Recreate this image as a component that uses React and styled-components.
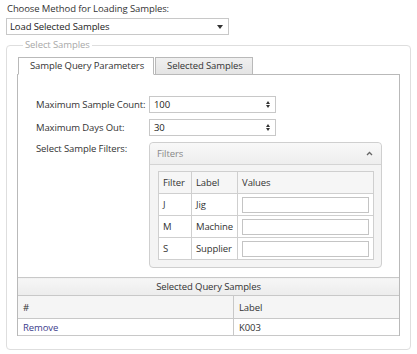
import styled, { createGlobalStyle } from 'styled-components'

const Global = createGlobalStyle`
  html, body {
    margin: 0;
    padding: 0;
    background: #fff;
  }
  body {
    font-family: "Open Sans", "Noto Sans", sans-serif;
    font-size: 9.5px;
    letter-spacing: -0.1px;
    color: #333;
  }
`

const Page = styled.div`
  width: 417px;
  height: 354px;
  box-sizing: border-box;
  padding: 1px 6px 0 6px;
`

const TopLabel = styled.div`
  height: 16px;
  line-height: 15px;
  padding-left: 1px;
`

const Select = styled.div`
  width: 223px;
  height: 17px;
  box-sizing: border-box;
  border: 1px solid #c8c8c8;
  display: flex;
  align-items: center;
  justify-content: space-between;
  padding: 0 5px 0 3px;
  margin-top: 1px;
  color: #222;
`

const Caret = styled.span`
  width: 0;
  height: 0;
  border-left: 3px solid transparent;
  border-right: 3px solid transparent;
  border-top: 4px solid #333;
`

const Fieldset = styled.fieldset`
  margin: 4px 0 0 0;
  padding: 6px 10px 12px 10px;
  border: 1px solid #dedede;
  border-radius: 4px;
  width: 405px;
  height: 311px;
  box-sizing: border-box;
`

const Legend = styled.legend`
  color: #a8a8a8;
  padding: 0 2px;
  margin-left: 6px;
  line-height: 12px;
`

const TabBar = styled.div`
  display: flex;
  padding-left: 1px;
  position: relative;
  z-index: 1;
`

const Tab = styled.div`
  height: 18px;
  box-sizing: border-box;
  border: 1px solid #b9b9b9;
  border-bottom: ${(p) => (p.$active ? '1px solid #fff' : '1px solid #b9b9b9')};
  background: ${(p) => (p.$active ? '#fff' : 'linear-gradient(#f0f0f0, #e4e4e4)')};
  padding: 0 9px 0 11px;
  line-height: 16px;
  color: #333;
  margin-right: 1px;
`

const Panel = styled.div`
  border: 1px solid #b9b9b9;
  margin-top: -1px;
  height: 262px;
  box-sizing: border-box;
  display: flex;
  flex-direction: column;
  justify-content: space-between;
`

const Form = styled.div`
  padding: 21px 0 0 18px;
  display: grid;
  grid-template-columns: 113px 127px;
  row-gap: 6px;
  align-items: center;
`

const FieldLabel = styled.div`
  color: #333;
  align-self: ${(p) => (p.$top ? 'start' : 'center')};
`

const Spinner = styled.div`
  height: 17px;
  box-sizing: border-box;
  border: 1px solid #c8c8c8;
  display: flex;
  align-items: center;
  justify-content: space-between;
  padding: 0 5px 0 4px;
  color: #222;
`

const Arrows = styled.span`
  display: flex;
  flex-direction: column;
  gap: 1px;
  &::before, &::after {
    content: '';
    width: 0;
    height: 0;
    border-left: 2.5px solid transparent;
    border-right: 2.5px solid transparent;
  }
  &::before { border-bottom: 3px solid #333; }
  &::after { border-top: 3px solid #333; }
`

const FiltersBox = styled.div`
  grid-column: 2;
  width: 233px;
  height: 126px;
  box-sizing: border-box;
  border: 1px solid #cfcfcf;
  border-radius: 4px;
  background: #f4f4f4;
  margin-top: -19px;
`

const FiltersHeader = styled.div`
  height: 22px;
  box-sizing: border-box;
  border-bottom: 1px solid #d4d4d4;
  display: flex;
  align-items: center;
  justify-content: space-between;
  padding: 0 8px 0 7px;
  color: #888;
  background: linear-gradient(#f8f8f8, #eeeeee);
  border-radius: 4px 4px 0 0;
`

const Chevron = styled.svg`
  width: 7px;
  height: 5px;
`

const FilterTable = styled.table`
  margin: 6px 0 0 8px;
  width: 216px;
  border-collapse: collapse;
  background: #fff;
  border: 1px solid #b4b4b4;
  td, th {
    border: 1px solid #cfcfcf;
    height: 22px;
    padding: 0 4px;
    text-align: left;
    font-weight: normal;
    box-sizing: border-box;
    color: #333;
  }
  th { background: #f6f6f6; }
`

const ValueInput = styled.div`
  height: 16px;
  border: 1px solid #c4c4c4;
  box-sizing: border-box;
`

const Samples = styled.table`
  width: 100%;
  border-collapse: collapse;
  margin-bottom: -1px;
  td, th {
    border: 1px solid #c8c8c8;
    padding: 0 5px;
    text-align: left;
    font-weight: normal;
    color: #333;
  }
  tr > *:first-child { border-left: 0; }
  tr > *:last-child { border-right: 0; }
`

const Caption = styled.th`
  height: 17px;
  text-align: center !important;
  background: linear-gradient(#f6f6f6, #ececec);
`

const ColHead = styled.th`
  height: 22px;
  background: #f5f5f5;
  width: ${(p) => p.$w || 'auto'};
`

const Link = styled.td`
  height: 16px;
  color: #3c3c8c !important;
`

const filters = [
  ['J', 'Jig'],
  ['M', 'Machine'],
  ['S', 'Supplier'],
]

export default function App() {
  return (
    <Page>
      <Global />
      <TopLabel>Choose Method for Loading Samples:</TopLabel>
      <Select>
        Load Selected Samples
        <Caret />
      </Select>
      <Fieldset>
        <Legend>Select Samples</Legend>
        <TabBar>
          <Tab $active>Sample Query Parameters</Tab>
          <Tab>Selected Samples</Tab>
        </TabBar>
        <Panel>
          <Form>
            <FieldLabel>Maximum Sample Count:</FieldLabel>
            <Spinner>
              100
              <Arrows />
            </Spinner>
            <FieldLabel>Maximum Days Out:</FieldLabel>
            <Spinner>
              30
              <Arrows />
            </Spinner>
            <FieldLabel $top>Select Sample Filters:</FieldLabel>
            <div />
            <FiltersBox>
              <FiltersHeader>
                Filters
                <Chevron viewBox="0 0 7 5">
                  <path d="M1 4 L3.5 1.5 L6 4" fill="none" stroke="#666" strokeWidth="1.3" />
                </Chevron>
              </FiltersHeader>
              <FilterTable>
                <thead>
                  <tr>
                    <th style={{ width: 33 }}>Filter</th>
                    <th style={{ width: 45 }}>Label</th>
                    <th>Values</th>
                  </tr>
                </thead>
                <tbody>
                  {filters.map(([code, label]) => (
                    <tr key={code}>
                      <td>{code}</td>
                      <td>{label}</td>
                      <td>
                        <ValueInput />
                      </td>
                    </tr>
                  ))}
                </tbody>
              </FilterTable>
            </FiltersBox>
          </Form>
          <Samples>
            <thead>
              <tr>
                <Caption colSpan={2}>Selected Query Samples</Caption>
              </tr>
              <tr>
                <ColHead $w="205px">#</ColHead>
                <ColHead>Label</ColHead>
              </tr>
            </thead>
            <tbody>
              <tr>
                <Link>Remove</Link>
                <td>K003</td>
              </tr>
            </tbody>
          </Samples>
        </Panel>
      </Fieldset>
    </Page>
  )
}
